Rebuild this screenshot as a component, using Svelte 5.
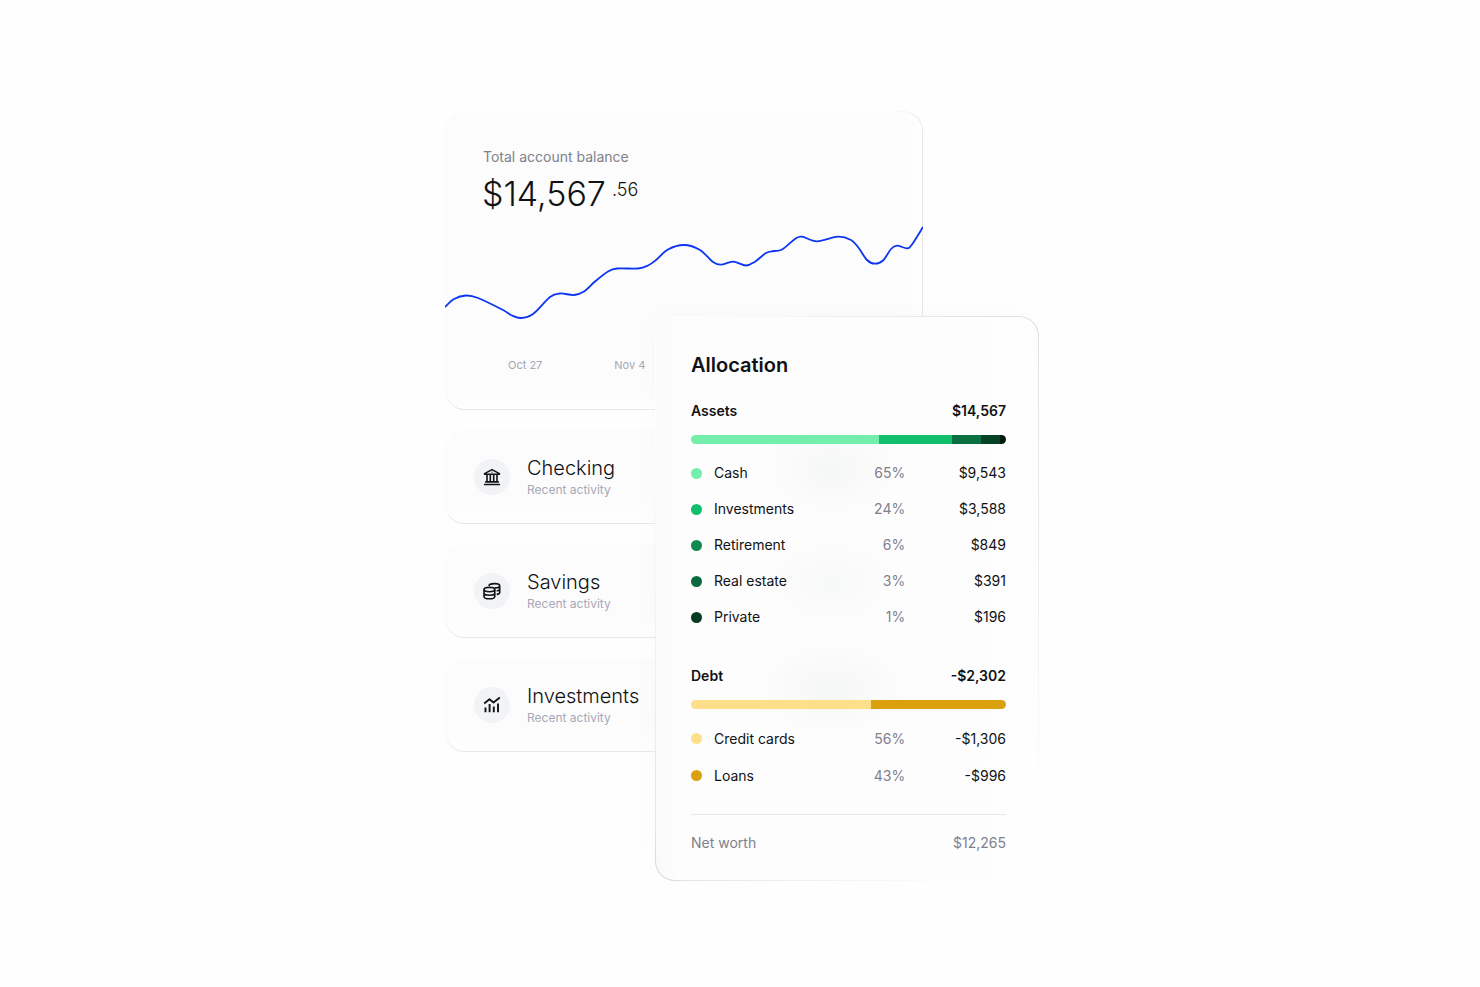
<script>
  const accounts = [
    { name: 'Checking', icon: 'bank' },
    { name: 'Savings', icon: 'coins' },
    { name: 'Investments', icon: 'chart' },
  ];

  const groups = [
    {
      title: 'Assets',
      total: '$14,567',
      segments: [
        { share: 188, color: '#74eeab' },
        { share: 73, color: '#12bf6c' },
        { share: 29, color: '#0a7041' },
        { share: 19, color: '#054226' },
        { share: 6, color: '#031a10' },
      ],
      rows: [
        { label: 'Cash', percent: '65%', value: '$9,543', color: '#74eeab' },
        { label: 'Investments', percent: '24%', value: '$3,588', color: '#12bf6c' },
        { label: 'Retirement', percent: '6%', value: '$849', color: '#118a50' },
        { label: 'Real estate', percent: '3%', value: '$391', color: '#0a6a3d' },
        { label: 'Private', percent: '1%', value: '$196', color: '#053d23' },
      ],
    },
    {
      title: 'Debt',
      total: '-$2,302',
      segments: [
        { share: 180, color: '#fedf89' },
        { share: 135, color: '#daa00d' },
      ],
      rows: [
        { label: 'Credit cards', percent: '56%', value: '-$1,306', color: '#fedf89' },
        { label: 'Loans', percent: '43%', value: '-$996', color: '#daa00d' },
      ],
    },
  ];

  const points = [
    [0, 85], [9, 77], [21, 73.5], [33, 76], [58, 88], [66, 93], [76, 96], [88, 92], [105, 75],
    [115, 71.5], [129, 73], [139, 69.5], [150, 59.5], [163, 49.5], [172, 46.5], [193, 46.5],
    [203, 43.5], [211, 38], [223, 27.5], [239, 23], [255, 28], [268, 40], [276, 42.7],
    [288, 39.7], [301, 43.5], [310, 39.7], [321, 31], [329, 29], [337, 27.5], [350, 17],
    [357, 14.7], [372, 19.3], [393, 14.7], [406, 18], [413, 25], [422, 38], [430, 41.7],
    [438, 38.5], [446, 27], [452, 23.7], [462, 26.3], [467, 22.5], [478, 5],
  ];

  // Catmull-Rom spline through the balance points, emitted as cubic segments
  function smooth(p) {
    let d = `M${p[0][0]} ${p[0][1]}`;
    for (let i = 0; i < p.length - 1; i++) {
      const a = p[i - 1] ?? p[i];
      const b = p[i];
      const c = p[i + 1];
      const e = p[i + 2] ?? c;
      d += `C${b[0] + (c[0] - a[0]) / 6} ${b[1] + (c[1] - a[1]) / 6} ${c[0] - (e[0] - b[0]) / 6} ${c[1] - (e[1] - b[1]) / 6} ${c[0]} ${c[1]}`;
    }
    return d;
  }
  const line = smooth(points);
</script>

<main>
  <div class="stage">
    <div class="left">
      <section class="card overview">
        <h2>Total account balance</h2>
        <p class="balance">$14,567<span>.56</span></p>
        <svg class="line" viewBox="0 0 478 100" preserveAspectRatio="none" aria-hidden="true">
          <path d={line} fill="none" stroke="#0b35f2" stroke-width="1.8" vector-effect="non-scaling-stroke" />
        </svg>
        <div class="axis"><span>Oct 27</span><span>Nov 4</span></div>
      </section>

      {#each accounts as account}
        <section class="card account">
          <div class="icon">
            <svg viewBox="0 0 18 18" width="18" height="18" fill="none" stroke="#101214" stroke-width="1.6" stroke-linejoin="round" aria-hidden="true">
              {#if account.icon === 'bank'}
                <path d="M1.6 5.6 9 1.6l7.4 4v.6H1.6z" />
                <path d="M4 7v6.6M7.3 7v6.6M10.7 7v6.6M14 7v6.6M2.2 13.9h13.6M1 16.5h16" />
                <circle cx="9" cy="4.2" r=".6" fill="#101214" stroke="none" />
              {:else if account.icon === 'coins'}
                <ellipse cx="6.4" cy="7.6" rx="5.4" ry="2.2" />
                <path d="M1 7.6v6.8c0 1.3 2.4 2.3 5.4 2.3s5.4-1 5.4-2.3V7.6M1 11c0 1.3 2.4 2.2 5.4 2.2s5.4-.9 5.4-2.2" />
                <path d="M6 3.9C6 2.6 8.5 1.6 11.5 1.6s5.2.9 5.2 2.1-2.2 2.1-5 2.2M16.7 3.7v6.7c0 .9-1.2 1.7-3 2M16.7 7.1c0 .9-1.2 1.6-3 1.9" />
              {:else}
                <path d="m1.2 7.4 5.3-4.2 4 3.2 6.3-5" stroke-width="1.9" />
                <path d="M2.5 11.4v4.8M6.6 8v8.2M10.800 10.6v5.6M15 7.6v8.6" stroke-width="1.9" />
              {/if}
            </svg>
          </div>
          <div class="names">
            <h3>{account.name}</h3>
            <p>Recent activity</p>
          </div>
        </section>
      {/each}
    </div>

    <section class="allocation">
      <h2>Allocation</h2>
      {#each groups as group}
        <div class="group">
          <div class="head"><h3>{group.title}</h3><strong>{group.total}</strong></div>
          <div class="bar">
            {#each group.segments as s}
              <span style="flex-grow: {s.share}; background: {s.color}"></span>
            {/each}
          </div>
          <table aria-label={group.title}>
            <tbody>
              {#each group.rows as row}
                <tr>
                  <th scope="row"><div><i style="background: {row.color}"></i>{row.label}</div></th>
                  <td class="percent">{row.percent}</td>
                  <td>{row.value}</td>
                </tr>
              {/each}
            </tbody>
          </table>
        </div>
      {/each}
      <div class="net"><span>Net worth</span><span>{'$12,265'}</span></div>
    </section>
  </div>
</main>

<style>
  :global(body) {
    margin: 0;
    background: #fefefe;
  }
  main {
    padding: 111px 0 106px 4px;
    font-family: Inter, 'Liberation Sans', sans-serif;
    color: #101214;
  }
  h2, h3, p {
    margin: 0;
    font-weight: 400;
  }
  .stage {
    display: grid;
    grid-template-columns: 210fr 268fr 116fr;
    max-width: 594px;
    margin: 0 auto;
    align-items: start;
  }
  .left {
    grid-area: 1 / 1 / 2 / 3;
    display: flex;
    flex-direction: column;
    gap: 20px;
  }
  .card {
    box-sizing: border-box;
    border: 1px solid transparent;
    border-radius: 20px;
    background:
      linear-gradient(to left, #fefefe, transparent 24px) padding-box,
      linear-gradient(to top, #fefefe, transparent 24px) padding-box,
      linear-gradient(#fcfcfc, #fcfcfc) padding-box,
      linear-gradient(to top, #e8e8e8, transparent 20px) border-box,
      linear-gradient(to left, #e8e8e8, transparent 28px) border-box,
      linear-gradient(#fcfcfc, #fcfcfc) border-box;
  }
  .overview {
    padding: 35px 0 34px;
  }
  .overview h2 {
    padding-left: 37px;
    font-size: 14px;
    line-height: 20px;
    color: #80808c;
  }
  .balance {
    display: flex;
    align-items: flex-start;
    gap: 6px;
    padding: 4px 0 0 36px;
    font-size: 34px;
    line-height: 46px;
    font-weight: 300;
  }
  .balance span {
    font-size: 18px;
    line-height: 38px;
  }
  .line {
    display: block;
    width: calc(100% + 2px);
    height: 100px;
    margin: 5px -1px 33px;
  }
  .axis {
    display: flex;
    gap: 72px;
    padding: 0 0 0 62px;
    font-size: 11px;
    line-height: 20px;
    color: #a6a6b4;
  }
  .account {
    display: flex;
    align-items: center;
    gap: 17px;
    height: 94px;
    padding: 0 28px;
  }
  .icon {
    display: grid;
    place-items: center;
    width: 36px;
    height: 36px;
    border-radius: 50%;
    background: #f2f3f6;
  }
  .names h3 {
    font-size: 20px;
    line-height: 26px;
    font-weight: 300;
  }
  .names p {
    font-size: 12px;
    line-height: 18px;
    color: #a8a8b8;
  }
  .allocation {
    grid-area: 1 / 2 / 2 / 4;
    position: relative;
    box-sizing: border-box;
    margin-top: 205px;
    padding: 34px 32px 26px 35px;
    border: 1px solid transparent;
    border-radius: 20px;
    background:
      radial-gradient(ellipse 72px 50px at 46% 27%, #f5f7f6, transparent) padding-box,
      radial-gradient(ellipse 72px 46px at 46% 47%, #f7f8f8, transparent) padding-box,
      radial-gradient(ellipse 80px 50px at 46% 66%, #f5f6f6, transparent) padding-box,
      linear-gradient(to right, #fafafa, #fdfdfd 24px, #fdfdfd 80%, #fefefe) padding-box,
      linear-gradient(to top right, #d4d4d4, #e6e6e6 5%, #fefefe 40%, #fefefe 55%, #efefef 75%, #dfdfdf) border-box;
    box-shadow: -8px -8px 24px rgba(0, 0, 0, 0.01);
  }
  .allocation h2 {
    font-size: 20px;
    line-height: 28px;
    font-weight: 600;
  }
  .group {
    padding-top: 22px;
  }
  .group + .group {
    padding-top: 31px;
  }
  .head {
    display: flex;
    justify-content: space-between;
    font-size: 14px;
    line-height: 20px;
  }
  .head h3 {
    font-size: 14px;
    font-weight: 600;
  }
  .head strong {
    font-weight: 600;
  }
  .bar {
    display: flex;
    height: 9px;
    margin: 14px 0 11px;
    border-radius: 5px;
    overflow: hidden;
  }
  .bar span {
    flex-basis: 0;
  }
  table {
    width: 100%;
    border-collapse: collapse;
    font-size: 14px;
    line-height: 20px;
  }
  tr {
    height: 36px;
  }
  .group + .group tr {
    height: 37px;
  }
  th, td {
    padding: 0;
    font-weight: 400;
    text-align: right;
  }
  th div {
    display: flex;
    align-items: center;
    gap: 12px;
  }
  th i {
    width: 11px;
    height: 11px;
    border-radius: 50%;
  }
  td {
    width: 32%;
  }
  td.percent {
    width: 20%;
    color: #80808c;
  }
  .net {
    display: flex;
    justify-content: space-between;
    margin-top: 20px;
    padding-top: 17px;
    border-top: 1px solid #e8e8ec;
    font-size: 14px;
    line-height: 22px;
    color: #80808c;
  }
</style>
